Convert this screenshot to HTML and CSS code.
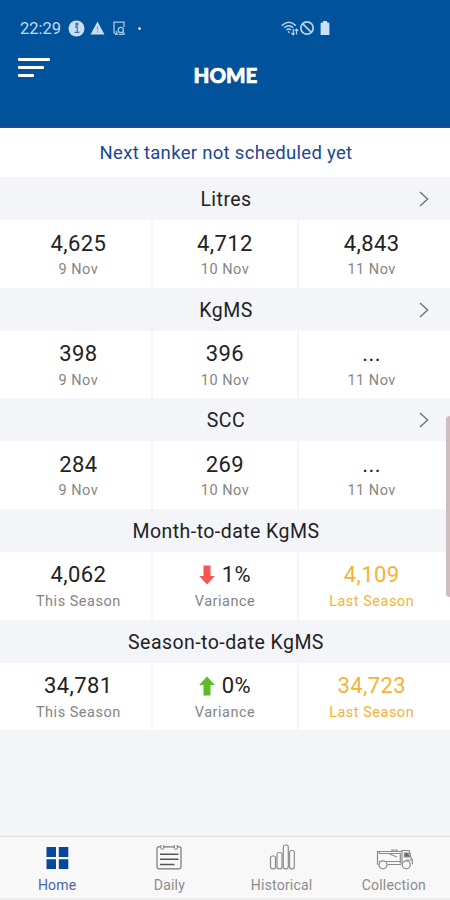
FILE: index.html
```html
<!DOCTYPE html>
<html lang="en">

<head>
  <meta charset="UTF-8">
  <title>Home</title>
  <link rel="stylesheet" href="styles.css">
</head>

<body>
  <!-- Header with status bar and title -->
  <header>
    <div class="status">
      <span class="time">22:29</span>
      <svg class="info" width="17" height="17" viewBox="0 0 17 17">
        <circle cx="8.5" cy="8.5" r="8" fill="#c9def4"/>
        <path d="M7 7h2.3v5M6.5 12.3h5M8 3.5h1.7v1.7H8z" fill="none" stroke="#3f78b5" stroke-width="1.3"/>
      </svg>
      <svg class="warning" width="15" height="14" viewBox="0 0 15 14">
        <path d="M7.5 .5L14.5 13.5H.5z" fill="#c9def4"/>
        <path d="M7.5 5v4M7.5 10v1.5" stroke="#7ba5d0" stroke-width="1.3"/>
      </svg>
      <svg class="doc" width="13" height="15" viewBox="0 0 13 15" fill="none" stroke="#a9c9e9" stroke-width="1.3">
        <path d="M4.5 13.3H2.8L1 11.5V1.2h10V6M4.5 13.3L3 10"/>
        <circle cx="7.8" cy="9" r="2.6"/>
        <path d="M9.6 11l2.2 2.5M5.5 13.4h5"/>
      </svg>
      <span class="dot"></span>
      <div class="signals">
        <svg width="18" height="15" viewBox="0 0 18 15" fill="none" stroke="#b9d3ed" stroke-width="1.5">
          <path d="M.8 4.6Q7.800-2 14.800 4.600M3.300 6.800Q7.800 2.600 12.300 6.800M5.600 9Q7.800 7 10 9M7 10.500l1.500 1.200"/>
          <path d="M12.300 8v6M10.300 11.800l2 2 1.200-1.600M15.500 13.500V8M13.800 9.800l1.700-1.800 1.700 1.800" stroke-width="1.2"/>
        </svg>
        <svg width="16" height="16" viewBox="0 0 16 16" fill="none" stroke="#b9d3ed" stroke-width="1.7">
          <circle cx="8" cy="8" r="6.2"/>
          <path d="M3.8 3.8l8.4 8.4"/>
        </svg>
        <svg width="10" height="14" viewBox="0 0 10 14" fill="#c9e2f5">
          <path d="M3 0h4v1.5h1.200q1.200 0 1.200 1.200V14H.6V2.700q0-1.200 1.200-1.200H3z"/>
        </svg>
      </div>
    </div>
    <div class="titlebar">
      <div class="menu">
        <span class="long"></span>
        <span class="mid"></span>
        <span class="short"></span>
      </div>
      <h1>HOME</h1>
    </div>
  </header>

  <!-- Main content -->
  <main>
    <p class="notice">Next tanker not scheduled yet</p>

    <section>
      <h2>Litres
        <svg class="chevron" width="10" height="16" viewBox="0 0 10 16"><path d="M1 1l7.6 7L1 15"/></svg>
      </h2>
      <div class="row">
        <div class="cell"><p class="value">4,625</p><p class="label">9 Nov</p></div>
        <div class="cell"><p class="value">4,712</p><p class="label">10 Nov</p></div>
        <div class="cell"><p class="value">4,843</p><p class="label">11 Nov</p></div>
      </div>
    </section>

    <section>
      <h2>KgMS
        <svg class="chevron" width="10" height="16" viewBox="0 0 10 16"><path d="M1 1l7.6 7L1 15"/></svg>
      </h2>
      <div class="row">
        <div class="cell"><p class="value">398</p><p class="label">9 Nov</p></div>
        <div class="cell"><p class="value">396</p><p class="label">10 Nov</p></div>
        <div class="cell"><p class="value">...</p><p class="label">11 Nov</p></div>
      </div>
    </section>

    <section>
      <h2>SCC
        <svg class="chevron" width="10" height="16" viewBox="0 0 10 16"><path d="M1 1l7.6 7L1 15"/></svg>
      </h2>
      <div class="row">
        <div class="cell"><p class="value">284</p><p class="label">9 Nov</p></div>
        <div class="cell"><p class="value">269</p><p class="label">10 Nov</p></div>
        <div class="cell"><p class="value">...</p><p class="label">11 Nov</p></div>
      </div>
    </section>

    <section>
      <h2>Month-to-date KgMS</h2>
      <div class="row">
        <div class="cell"><p class="value">4,062</p><p class="label">This Season</p></div>
        <div class="cell">
          <p class="value">
            <svg class="arrow" width="16" height="20" viewBox="0 0 16 20"><path d="M4.5 .5h7V11h4.300L8 19.500.2 11h4.300z" fill="#f9564f"/></svg>1%
          </p>
          <p class="label">Variance</p>
        </div>
        <div class="cell last"><p class="value">4,109</p><p class="label">Last Season</p></div>
      </div>
    </section>

    <section>
      <h2>Season-to-date KgMS</h2>
      <div class="row">
        <div class="cell"><p class="value">34,781</p><p class="label">This Season</p></div>
        <div class="cell">
          <p class="value">
            <svg class="arrow" width="16" height="20" viewBox="0 0 16 20"><path d="M4.5 19.500h7V9h4.300L8 .5.2 9h4.300z" fill="#5dbb26"/></svg>0%
          </p>
          <p class="label">Variance</p>
        </div>
        <div class="cell last"><p class="value">34,723</p><p class="label">Last Season</p></div>
      </div>
    </section>
  </main>

  <!-- Edge panel handle -->
  <div class="handle"></div>

  <!-- Bottom tabs -->
  <nav>
    <div class="tab active">
      <svg width="38" height="28" viewBox="0 0 38 28" fill="#07479c">
        <path d="M8.500 3h9.500v10H8.500zM20.800 3h9.500v10h-9.500zM8.500 15.200h9.500v9.800H8.500zM20.800 15.200h9.500v9.800h-9.500z"/>
      </svg>
      <span>Home</span>
    </div>
    <div class="tab">
      <svg width="38" height="28" viewBox="0 0 38 28" fill="none" stroke="#777" stroke-width="1.200">
        <path d="M10.500 2.800H8.500Q7 2.800 7 4.500V23q0 1.800 1.800 1.800h20.400Q31 24.800 31 23V4.500q0-1.700-1.500-1.700h-2M14 2.800h10"/>
        <path d="M10.800 1v3.500q1.500 2 3 0V1M24.300 1v3.500q1.500 2 3 0V1" stroke-width="1"/>
        <path d="M10 10.300h18.500M10 15.300h18.500M10 20.500h14.500" stroke="#555" stroke-width="1.500"/>
      </svg>
      <span>Daily</span>
    </div>
    <div class="tab">
      <svg width="38" height="28" viewBox="0 0 38 28" fill="none" stroke="#8c8c8c" stroke-width="1.200">
        <rect x="7.500" y="12" width="5" height="12.800" rx="2"/>
        <rect x="14" y="8.500" width="5" height="16.300" rx="2"/>
        <rect x="20.300" y="1" width="5" height="23.800" rx="2.200"/>
        <rect x="26.500" y="6.500" width="4.800" height="18.300" rx="2"/>
      </svg>
      <span>Historical</span>
    </div>
    <div class="tab">
      <svg width="38" height="28" viewBox="0 0 38 28" fill="none" stroke="#8c8c8c" stroke-width="1.200">
        <path d="M2.500 20.500V7.500h1.800v2h21v10M4.300 7.500H27M17 7.500V6h5v1.500M4 17.500h22M14.500 10l7.500 3"/>
        <path d="M27 20V6.500h7q1.500 3 1.800 6.500l1.500 3v4.200"/>
        <path d="M29.500 9h4l1 4h-5z" fill="#666"/>
        <path d="M2.500 20.500h1M12.500 20.500H26M31 16h6"/>
        <circle cx="8" cy="20.800" r="4" fill="#f8f8f8"/>
        <circle cx="31.300" cy="20.800" r="4" fill="#f8f8f8"/>
      </svg>
      <span>Collection</span>
    </div>
  </nav>
</body>

</html>
```
FILE: styles.css
```css
* {
  margin: 0;
  padding: 0;
  box-sizing: border-box;
}

body {
  height: 900px;
  display: flex;
  flex-direction: column;
  background: #f3f5f9;
  font-family: Roboto, "Noto Sans", sans-serif;
  color: #222;
  overflow: hidden;
}

/* Header */
header {
  height: 128px;
  background: #00529b;
  border-bottom: 2px solid #1a4f95;
  flex-shrink: 0;
}

.status {
  height: 56px;
  padding-left: 20px;
  display: flex;
  align-items: center;
  color: #c4daf1;
}

.time {
  width: 48px;
  font-size: 16.5px;
}

.warning {
  margin-left: 5px;
}

.doc {
  margin-left: 8px;
}

.dot {
  width: 3px;
  height: 3px;
  margin-left: 12px;
  border-radius: 50%;
  background: #c4daf1;
}

.signals {
  display: flex;
  align-items: center;
  margin-left: 140px;
}

.signals svg:last-child {
  margin-left: 5px;
}

.titlebar {
  display: grid;
  grid-template-columns: 1fr auto 1fr;
  padding: 0 17px 0 18px;
}

.menu {
  display: flex;
  flex-direction: column;
  gap: 5px;
  padding-top: 2px;
}

.menu span {
  height: 3px;
  border-radius: 1px;
  background: white;
}

.menu .long {
  width: 32px;
}

.menu .mid {
  width: 26px;
}

.menu .short {
  width: 16px;
}

h1 {
  padding-top: 7px;
  font-family: Lato, sans-serif;
  font-size: 20.5px;
  line-height: 25px;
  font-weight: 900;
  -webkit-text-stroke: 0.7px white;
  color: white;
}

/* Tanker notice */
.notice {
  height: 49px;
  line-height: 51px;
  padding-left: 2px;
  background: white;
  color: #1c4596;
  font-size: 18.5px;
  letter-spacing: 0.3px;
  text-align: center;
}

/* Data sections */
main {
  flex: 1;
}

section {
  height: 110.67px;
}

h2 {
  height: 43px;
  line-height: 46px;
  padding-left: 2px;
  position: relative;
  font-size: 19.5px;
  font-weight: 400;
  letter-spacing: 0.45px;
  text-align: center;
}

.chevron {
  position: absolute;
  right: 21px;
  top: 14px;
  fill: none;
  stroke: #777;
  stroke-width: 1.5;
}

.row {
  height: 67.67px;
  padding: 0 5px;
  display: grid;
  grid-template-columns: repeat(3, 1fr);
  background: white;
}

.cell {
  padding-top: 9px;
  text-align: center;
}

.cell + .cell {
  box-shadow: -1px 0 #f5f6f9, inset 1px 0 #f5f6f9;
}

.value {
  height: 28px;
  display: flex;
  justify-content: center;
  align-items: center;
  font-size: 22px;
  letter-spacing: 0.4px;
}

.arrow {
  margin-right: 7px;
}

.label {
  line-height: 26px;
  font-size: 14.5px;
  letter-spacing: 0.5px;
  color: #858585;
}

.last .value,
.last .label {
  color: #f7b236;
}

/* Edge handle lies over the right side */
.handle {
  position: absolute;
  right: 0;
  top: 416px;
  width: 4px;
  height: 181px;
  border-radius: 4px 0 0 4px;
  background: #cdbdc0;
}

/* Bottom tabs */
nav {
  height: 64px;
  padding-left: 1px;
  display: grid;
  grid-template-columns: repeat(4, 1fr);
  background: #f8f8f8;
  border-top: 1px solid #dde0e5;
  border-bottom: 2px solid #ececec;
}

.tab {
  display: flex;
  flex-direction: column;
  align-items: center;
  padding-top: 7px;
  font-size: 14px;
  line-height: 26px;
  letter-spacing: 0.2px;
  color: #8c8c8c;
}

.tab svg {
  flex-shrink: 0;
}

.active {
  color: #4864ad;
}
```
